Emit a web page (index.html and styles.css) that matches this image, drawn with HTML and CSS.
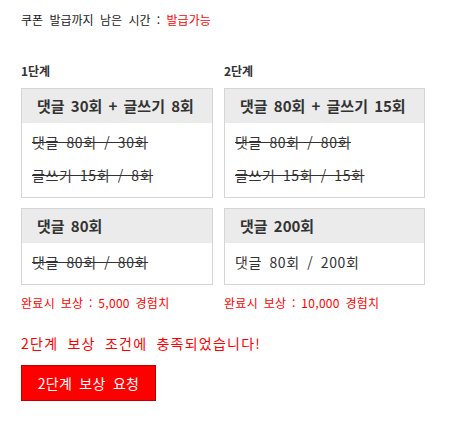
FILE: index.html
```html
<!DOCTYPE html>
<html lang="ko">
<head>
<meta charset="utf-8">
<link rel="stylesheet" href="styles.css">
</head>
<body>
<div class="page">
  <p class="timer">쿠폰 발급까지 남은 시간 : <span class="avail">발급가능</span></p>
  <div class="stages">
    <div class="stage stage-1">
      <div class="stage-label">1단계</div>
      <div class="box">
        <div class="box-head">댓글 30회 + 글쓰기 8회</div>
        <div class="box-body">
          <div class="line done">댓글 80회 / 30회</div>
          <div class="line done">글쓰기 15회 / 8회</div>
        </div>
      </div>
      <div class="box">
        <div class="box-head">댓글 80회</div>
        <div class="box-body">
          <div class="line done">댓글 80회 / 80회</div>
        </div>
      </div>
      <div class="reward">완료시 보상 : 5,000 경험치</div>
    </div>
    <div class="stage stage-2">
      <div class="stage-label">2단계</div>
      <div class="box">
        <div class="box-head">댓글 80회 + 글쓰기 15회</div>
        <div class="box-body">
          <div class="line done">댓글 80회 / 80회</div>
          <div class="line done">글쓰기 15회 / 15회</div>
        </div>
      </div>
      <div class="box">
        <div class="box-head">댓글 200회</div>
        <div class="box-body">
          <div class="line">댓글 80회 / 200회</div>
        </div>
      </div>
      <div class="reward">완료시 보상 : 10,000 경험치</div>
    </div>
  </div>
  <p class="message">2단계 보상 조건에 충족되었습니다!</p>
  <button class="request">2단계 보상 요청</button>
</div>
</body>
</html>
```
FILE: styles.css
```css
html, body {
  margin: 0;
  padding: 0;
  background: #fff;
}
body {
  font-family: "Noto Sans CJK KR", "Noto Sans", sans-serif;
  color: #333;
}
.page {
  padding: 12px 21px;
}
.timer {
  margin: 0;
  font-size: 12px;
  line-height: 16px;
  color: #222;
  word-spacing: 3px;
}
.avail {
  color: #f00;
}
.stages {
  display: flex;
  gap: 11px;
  margin-top: 35px;
}
.stage-1 { width: 192px; }
.stage-2 { width: 201px; }
.stage-label {
  font-size: 12px;
  font-weight: bold;
  line-height: 16px;
  color: #333;
  margin-bottom: 9px;
}
.box {
  border: 1px solid #d5d5d5;
  margin-bottom: 10px;
}
.box-head {
  background: #ebebeb;
  height: 34px;
  line-height: 34px;
  padding: 0 15px;
  font-size: 15px;
  font-weight: bold;
  color: #333;
  white-space: nowrap;
  word-spacing: 2px;
}
.box-body {
  padding: 3px 10px 5px;
}
.line {
  font-size: 14px;
  line-height: 33px;
  color: #333;
  word-spacing: 3px;
  letter-spacing: 0.6px;
  white-space: nowrap;
}
.line.done {
  text-decoration: line-through;
}
.reward {
  margin-top: 4px;
  font-size: 12px;
  line-height: 16px;
  color: #f00;
  word-spacing: 2px;
  letter-spacing: 0.3px;
  white-space: nowrap;
}
.message {
  margin: 22px 0 0;
  font-size: 14px;
  line-height: 20px;
  color: #f00;
  word-spacing: 4px;
  letter-spacing: 1.25px;
}
.request {
  display: block;
  margin-top: 12px;
  width: 135px;
  height: 36px;
  background: #f00;
  border: 1px solid #c00000;
  color: #fff;
  font-family: "Noto Sans CJK KR", "Noto Sans", sans-serif;
  font-size: 14px;
  word-spacing: 3px;
  letter-spacing: 0.3px;
  padding: 0;
}
```
